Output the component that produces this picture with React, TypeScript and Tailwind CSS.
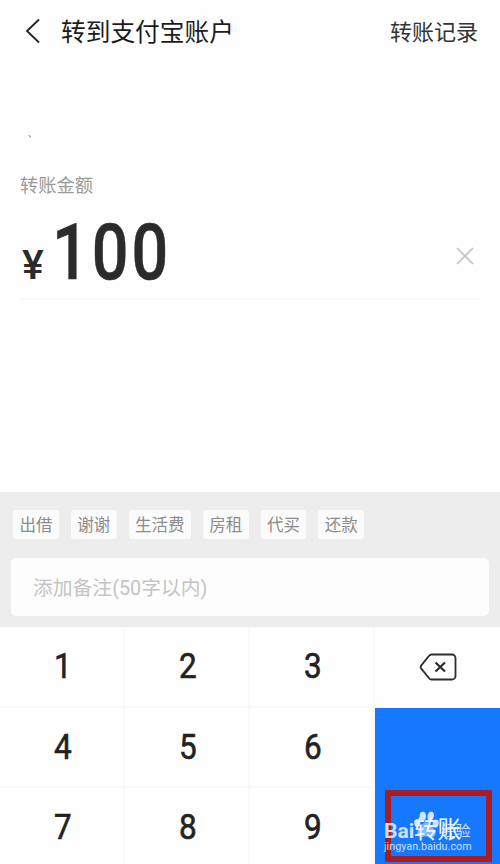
import React from 'react';
import { X } from 'lucide-react';

const tags = ['出借', '谢谢', '生活费', '房租', '代买', '还款'];
const rows = [
  ['1', '2', '3'],
  ['4', '5', '6'],
  ['7', '8', '9'],
];

const Watermark: React.FC = () => (
  <div className="absolute left-[9px] top-[114px] w-[86px] text-[#e6f0ff]/90 pointer-events-none">
    <svg className="absolute left-[30px] top-[-11px]" width="25" height="27" viewBox="0 0 27 29" fill="currentColor">
      <ellipse cx="3.5" cy="13" rx="3.2" ry="4.4" transform="rotate(-15 3.5 13)" />
      <ellipse cx="9.5" cy="5.5" rx="3.4" ry="4.8" />
      <ellipse cx="18" cy="5.5" rx="3.4" ry="4.8" transform="rotate(12 18 5.5)" />
      <ellipse cx="23.5" cy="13.5" rx="3.2" ry="4.4" transform="rotate(15 23.5 13.5)" />
      <path fillOpacity="0.6" d="M13.5 12c4 0 5 4 8 7 3.5 3.5 2 9-2.5 9-3 0-3.5-.8-5.5-.8s-3 .8-5.500.8c-5 0-6-5.500-2.500-9 3-3 4-7 8-7z" />
    </svg>
    <div className="flex h-[18px] items-center justify-between leading-none">
      <span className="text-[21px] font-bold">Bai</span>
      <span className="text-[15px] tracking-[-0.5px]">经验</span>
    </div>
    <p className="text-[10.8px] leading-[14px]">jingyan.baidu.com</p>
  </div>
);

export default function App() {
  return (
    <div className="flex h-[864px] w-[500px] flex-col overflow-hidden bg-[#fefefe] font-['Roboto','Noto_Sans_CJK_SC',sans-serif] text-[#2b2b2b]">
      {/* Header */}
      <header className="flex h-[62px] shrink-0 items-center pl-[25px] pr-[22px]">
        <svg width="16" height="26" viewBox="0 0 16 26" fill="none" stroke="#222" strokeWidth="1.8">
          <path d="M14 1.5 2 13l12 11.5" />
        </svg>
        <h1 className="ml-5 pt-[4px] text-[24.7px] leading-none text-[#1c1c1c]">转到支付宝账户</h1>
        <span className="ml-auto pt-[4px] text-[22px] leading-none text-[#333]">转账记录</span>
      </header>

      {/* Amount */}
      <main className="flex h-[430px] shrink-0 flex-col px-5">
        <span className="ml-[8px] mt-[65px] h-[14px] text-[9px] leading-[14px] text-[#777]">、</span>
        <p className="mt-[33px] text-[18.3px] leading-6 text-[#999]">转账金额</p>
        <div className="mt-[16px] flex h-[86px] items-center border-b-2 border-[#f8f8f8]">
          <div className="flex items-baseline pb-[6px] font-medium">
            <span className="ml-[2px] text-[41px] leading-none">¥</span>
            <span className="ml-[8px] origin-left scale-x-[0.84] text-[77px] leading-none tracking-[3.6px] [-webkit-text-stroke:0.5px_#2b2b2b]">100</span>
          </div>
          <X className="ml-auto" size={30} strokeWidth={1.4} color="#c4c4c4" />
        </div>
      </main>

      {/* Remark */}
      <section className="flex h-[135px] shrink-0 flex-col bg-[#ededed] px-[11px]">
        <div className="ml-[2px] mt-[18px] flex gap-[12px]">
          {tags.map((tag) => (
            <span key={tag} className="flex h-[29px] items-center rounded-[3px] bg-[#fbfbfb] px-[6.4px] pt-[3px] text-[16.5px] leading-none text-[#8c8c8c]">
              {tag}
            </span>
          ))}
        </div>
        <div className="mt-[19px] flex h-[58px] items-center rounded-[5px] bg-[#fdfdfd] pl-[22px] pt-[3px] text-[19.8px] text-[#c4c4c4]">
          添加备注(50字以内)
        </div>
      </section>

      {/* Keypad */}
      <section className="flex h-[240px] shrink-0">
        <div className="w-[375px]">
          {rows.map((row) => (
            <div key={row[0]} className="flex h-[80.5px] border-b-2 border-[#f9f9f9]">
              {row.map((n) => (
                <button key={n} className="w-[125px] border-r-2 border-[#f9f9f9] pl-[2px] pt-[1px] text-[35px] leading-none text-[#222]">
                  <span className="inline-block scale-x-[0.9] [-webkit-text-stroke:0.6px_#222]">{n}</span>
                </button>
              ))}
            </div>
          ))}
        </div>
        <div className="flex w-[125px] flex-col">
          <button className="flex h-[81px] items-center justify-center pb-[2px]">
            <svg width="38" height="28" viewBox="0 0 38 28" fill="none" stroke="#2b2b2b" strokeWidth="1.8">
              <path d="M12.5 1.500H33a3.500 3.500 0 0 1 3.500 3.500v18a3.500 3.500 0 0 1-3.500 3.500H12.500a3 3 0 0 1-2.400-1.200L2.300 15.600a2.500 2.500 0 0 1 0-3.200l7.800-9.700a3 3 0 0 1 2.400-1.200z" />
              <path d="m16.5 9.5 9.5 9M26 9.500l-9.500 9" strokeWidth="2.2" />
            </svg>
          </button>
          <div className="relative flex-1 bg-[#1677ff]">
            <div className="absolute left-[10px] top-[82px] h-[72px] w-[107px] border-[6px] border-[#a81c24]" />
            <span className="absolute left-[39px] top-[108px] text-[23.5px] leading-[28px] text-white">转账</span>
            <Watermark />
          </div>
        </div>
      </section>
    </div>
  );
}
